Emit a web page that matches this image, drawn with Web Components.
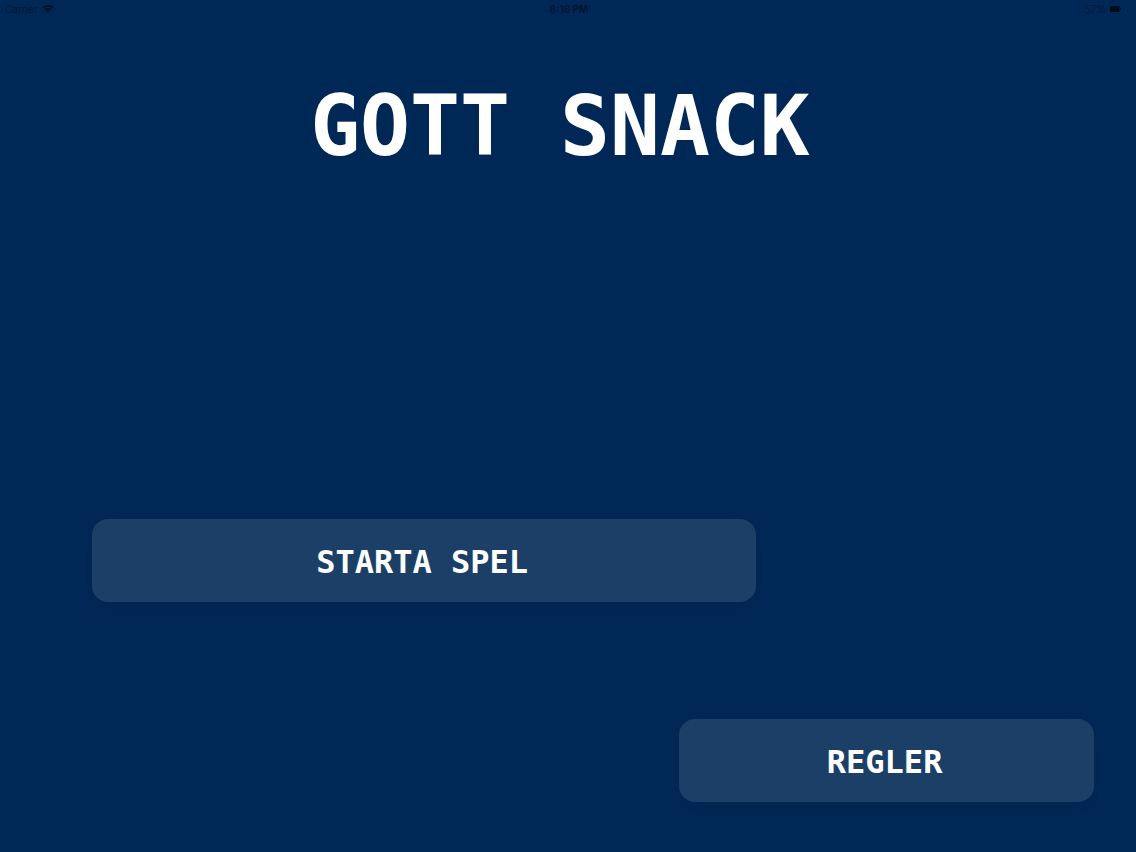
<!DOCTYPE html>
<html lang="sv">
<head>
<meta charset="utf-8">
<meta name="viewport" content="width=device-width, initial-scale=1">
<title>Gott Snack</title>
<style>
  html { background: #002857; }
  body { margin: 0; }
</style>
</head>
<body>
<gott-screen>
  <status-bar slot="status" carrier="Carrier" time="8:16 PM" battery="57%"></status-bar>
  <game-title slot="title">GOTT SNACK</game-title>
  <menu-button slot="start">STARTA SPEL</menu-button>
  <menu-button slot="rules">REGLER</menu-button>
</gott-screen>

<script>
  class GottScreen extends HTMLElement {
    constructor() {
      super();
      this.attachShadow({ mode: "open" }).innerHTML = `
        <style>
          :host {
            display: flex;
            flex-direction: column;
            box-sizing: border-box;
            min-height: 100vh;
            padding-bottom: 50px;
            background: #002857;
            color: #fff;
            font-family: "DejaVu Sans Mono", monospace;
            font-weight: 700;
          }
          main { display: flex; flex-direction: column; flex: 1; padding-top: 59px; }
          nav {
            display: flex;
            flex-direction: column;
            gap: 117px;
            margin-top: auto;
            padding: 0 42px 0 92px;
          }
          .start { width: 66.3%; }
          .rules { width: 41.4%; align-self: flex-end; }
        </style>
        <slot name="status"></slot>
        <main>
          <slot name="title"></slot>
          <nav>
            <div class="start"><slot name="start"></slot></div>
            <div class="rules"><slot name="rules"></slot></div>
          </nav>
        </main>`;
    }
  }

  class StatusBar extends HTMLElement {
    constructor() {
      super();
      this.attachShadow({ mode: "open" }).innerHTML = `
        <style>
          :host {
            display: grid;
            grid-template-columns: 1fr auto 1fr;
            align-items: center;
            height: 18px;
            padding: 0 3px 0 5px;
            color: #001533;
            font: 400 10px/18px Inter, sans-serif;
          }
          .left, .right { display: flex; align-items: center; }
          .left { gap: 4px; }
          .right { gap: 4px; justify-content: flex-end; padding-right: 12px; }
          .time { font-weight: 700; }
          svg { display: block; }
        </style>
        <span class="left"><span id="carrier"></span>
          <svg width="12" height="8" viewBox="0 0 12 8" fill="none" stroke="#000f24" stroke-width="1.5" aria-hidden="true">
            <path d="M.6 2.8Q6-1.5 11.4 2.8M2.6 4.9Q6 2.2 9.4 4.9"/>
            <path d="M4.1 5.9Q6 4.6 7.9 5.9L6 8Z" fill="#000f24" stroke="none"/>
          </svg>
        </span>
        <span class="time" id="time"></span>
        <span class="right"><span id="battery"></span>
          <svg width="11" height="6" viewBox="0 0 11 6" fill="#000a18" aria-hidden="true">
            <rect width="9.5" height="6" rx="1"/><rect x="10" y="2" width="1" height="2"/>
          </svg>
        </span>`;
    }
    connectedCallback() {
      for (const name of ["carrier", "time", "battery"])
        this.shadowRoot.getElementById(name).textContent = this.getAttribute(name);
    }
  }

  class GameTitle extends HTMLElement {
    constructor() {
      super();
      this.attachShadow({ mode: "open" }).innerHTML = `
        <style>
          :host { display: block; padding-right: 16px; }
          h1 { margin: 0; font-size: 83px; line-height: 100px; font-weight: 700; text-align: center; }
        </style>
        <h1><slot></slot></h1>`;
    }
  }

  class MenuButton extends HTMLElement {
    constructor() {
      super();
      this.attachShadow({ mode: "open" }).innerHTML = `
        <style>
          :host { display: block; }
          button {
            display: block;
            box-sizing: border-box;
            width: 100%;
            margin: 0;
            padding: 23px 4px 20px 0;
            border: 0;
            border-radius: 16px;
            background: #1b3f67;
            box-shadow: 0 6px 16px rgba(0, 36, 72, .5);
            color: inherit;
            font: inherit;
            font-size: 32px;
            line-height: 40px;
            text-align: center;
            cursor: pointer;
          }
        </style>
        <button type="button"><slot></slot></button>`;
    }
  }

  customElements.define("gott-screen", GottScreen);
  customElements.define("status-bar", StatusBar);
  customElements.define("game-title", GameTitle);
  customElements.define("menu-button", MenuButton);
</script>
</body>
</html>
